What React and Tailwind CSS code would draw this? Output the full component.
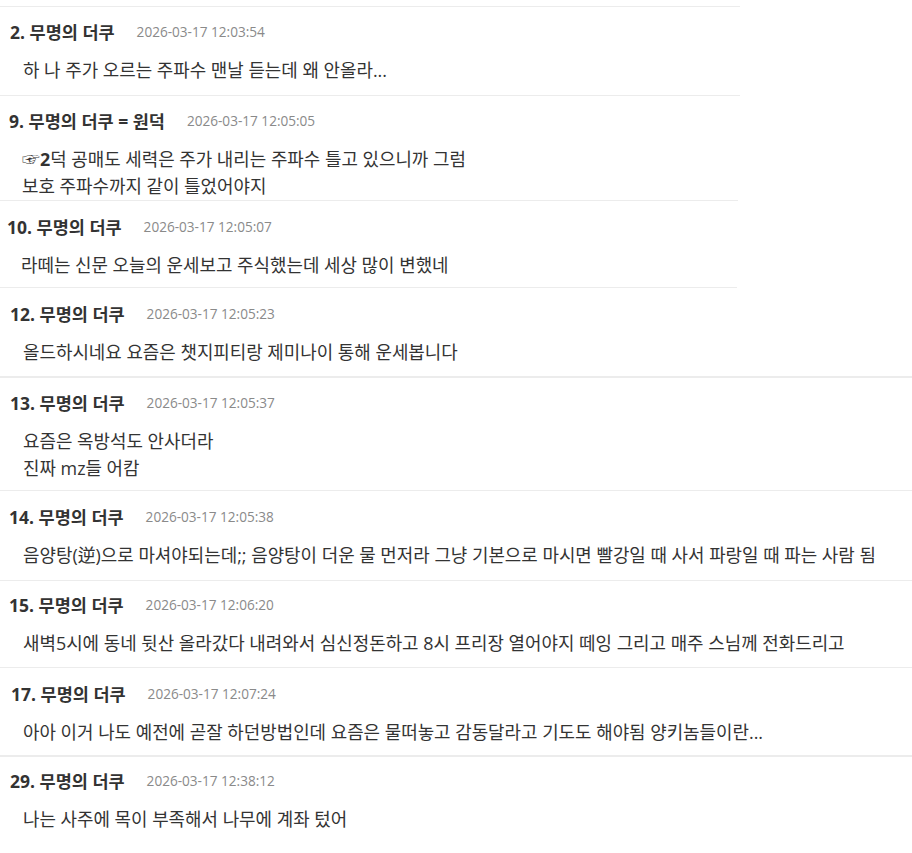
import React from 'react';

const comments = [
  { no: 2, name: '무명의 더쿠', time: '2026-03-17 12:03:54', lines: ['하 나 주가 오르는 주파수 맨날 듣는데 왜 안올라...'], wrap: 'w-[740px]', hx: 'pl-[10px]', cx: 'pl-[23px]', pt: 'pt-[15px]', pb: 'pb-[11px]' },
  { no: 9, name: '무명의 더쿠 = 원덕', time: '2026-03-17 12:05:05', lines: [[<span key="p">☞<b>2</b></span>, '덕 공매도 세력은 주가 내리는 주파수 틀고 있으니까 그럼'], '보호 주파수까지 같이 틀었어야지'], wrap: 'w-[738px]', hx: 'pl-[9px]', cx: 'pl-[22px]', pt: 'pt-[15px]', pb: 'pb-0' },
  { no: 10, name: '무명의 더쿠', time: '2026-03-17 12:05:07', lines: ['라떼는 신문 오늘의 운세보고 주식했는데 세상 많이 변했네'], wrap: 'w-[737px]', hx: 'pl-[7px]', cx: 'pl-[21px]', pt: 'pt-[16px]', pb: 'pb-[8px]' },
  { no: 12, name: '무명의 더쿠', time: '2026-03-17 12:05:23', lines: ['올드하시네요 요즘은 챗지피티랑 제미나이 통해 운세봅니다'], wrap: 'w-full', hx: 'pl-[10px]', cx: 'pl-[23px]', pt: 'pt-[16px]', pb: 'pb-[10px]', thick: true },
  { no: 13, name: '무명의 더쿠', time: '2026-03-17 12:05:37', lines: ['요즘은 옥방석도 안사더라', '진짜 mz들 어캄'], wrap: 'w-full', hx: 'pl-[10px]', cx: 'pl-[23px]', pt: 'pt-[15px]', pb: 'pb-[8px]' },
  { no: 14, name: '무명의 더쿠', time: '2026-03-17 12:05:38', lines: ['음양탕(逆)으로 마셔야되는데;; 음양탕이 더운 물 먼저라 그냥 기본으로 마시면 빨강일 때 사서 파랑일 때 파는 사람 됨'], wrap: 'w-full', hx: 'pl-[9px]', cx: 'pl-[23px]', pt: 'pt-[16px]', pb: 'pb-[11px]' },
  { no: 15, name: '무명의 더쿠', time: '2026-03-17 12:06:20', lines: ['새벽5시에 동네 뒷산 올라갔다 내려와서 심신정돈하고 8시 프리장 열어야지 떼잉 그리고 매주 스님께 전화드리고'], wrap: 'w-full', hx: 'pl-[9px]', cx: 'pl-[23px]', pt: 'pt-[14px]', pb: 'pb-[10px]' },
  { no: 17, name: '무명의 더쿠', time: '2026-03-17 12:07:24', lines: ['아아 이거 나도 예전에 곧잘 하던방법인데 요즘은 물떠놓고 감동달라고 기도도 해야됨 양키놈들이란...'], wrap: 'w-full', hx: 'pl-[11px]', cx: 'pl-[23px]', pt: 'pt-[16px]', pb: 'pb-[9px]', thick: true },
  { no: 29, name: '무명의 더쿠', time: '2026-03-17 12:38:12', lines: ['나는 사주에 목이 부족해서 나무에 계좌 텄어'], wrap: 'w-full', hx: 'pl-[10px]', cx: 'pl-[23px]', pt: 'pt-[14px]', pb: 'pb-[11px]', last: true },
];

function Comment({ c }) {
  const border = c.last ? '' : c.thick ? 'border-b-2 border-[#ececec]' : 'border-b border-[#ececec]';
  return (
    <div className={`${c.wrap} ${c.pt} ${c.pb} ${border}`}>
      <div className={`${c.hx} flex h-[20px] items-center whitespace-nowrap`}>
        <span className="text-[17.5px] leading-[20px] font-bold text-[#333]">
          {c.no}. {c.name}
        </span>
        <span className="ml-[22px] text-[13.6px] leading-[20px] text-[#8a8a8a]">{c.time}</span>
      </div>
      <div className={`${c.cx} mt-[15px] text-[17.9px] text-[#333] whitespace-nowrap`}>
        {c.lines.map((l, i) => (
          <div key={i} className="h-[27px] leading-[27px] overflow-visible">
            {l}
          </div>
        ))}
      </div>
    </div>
  );
}

export default function App() {
  return (
    <div
      className="w-[912px] h-[853px] bg-white overflow-hidden pt-[6px]"
      style={{ fontFamily: '"Open Sans", "Noto Sans CJK KR", sans-serif' }}
    >
      <div className="w-[740px] border-t border-[#ececec]" />
      {comments.map((c) => (
        <Comment key={c.no} c={c} />
      ))}
    </div>
  );
}
